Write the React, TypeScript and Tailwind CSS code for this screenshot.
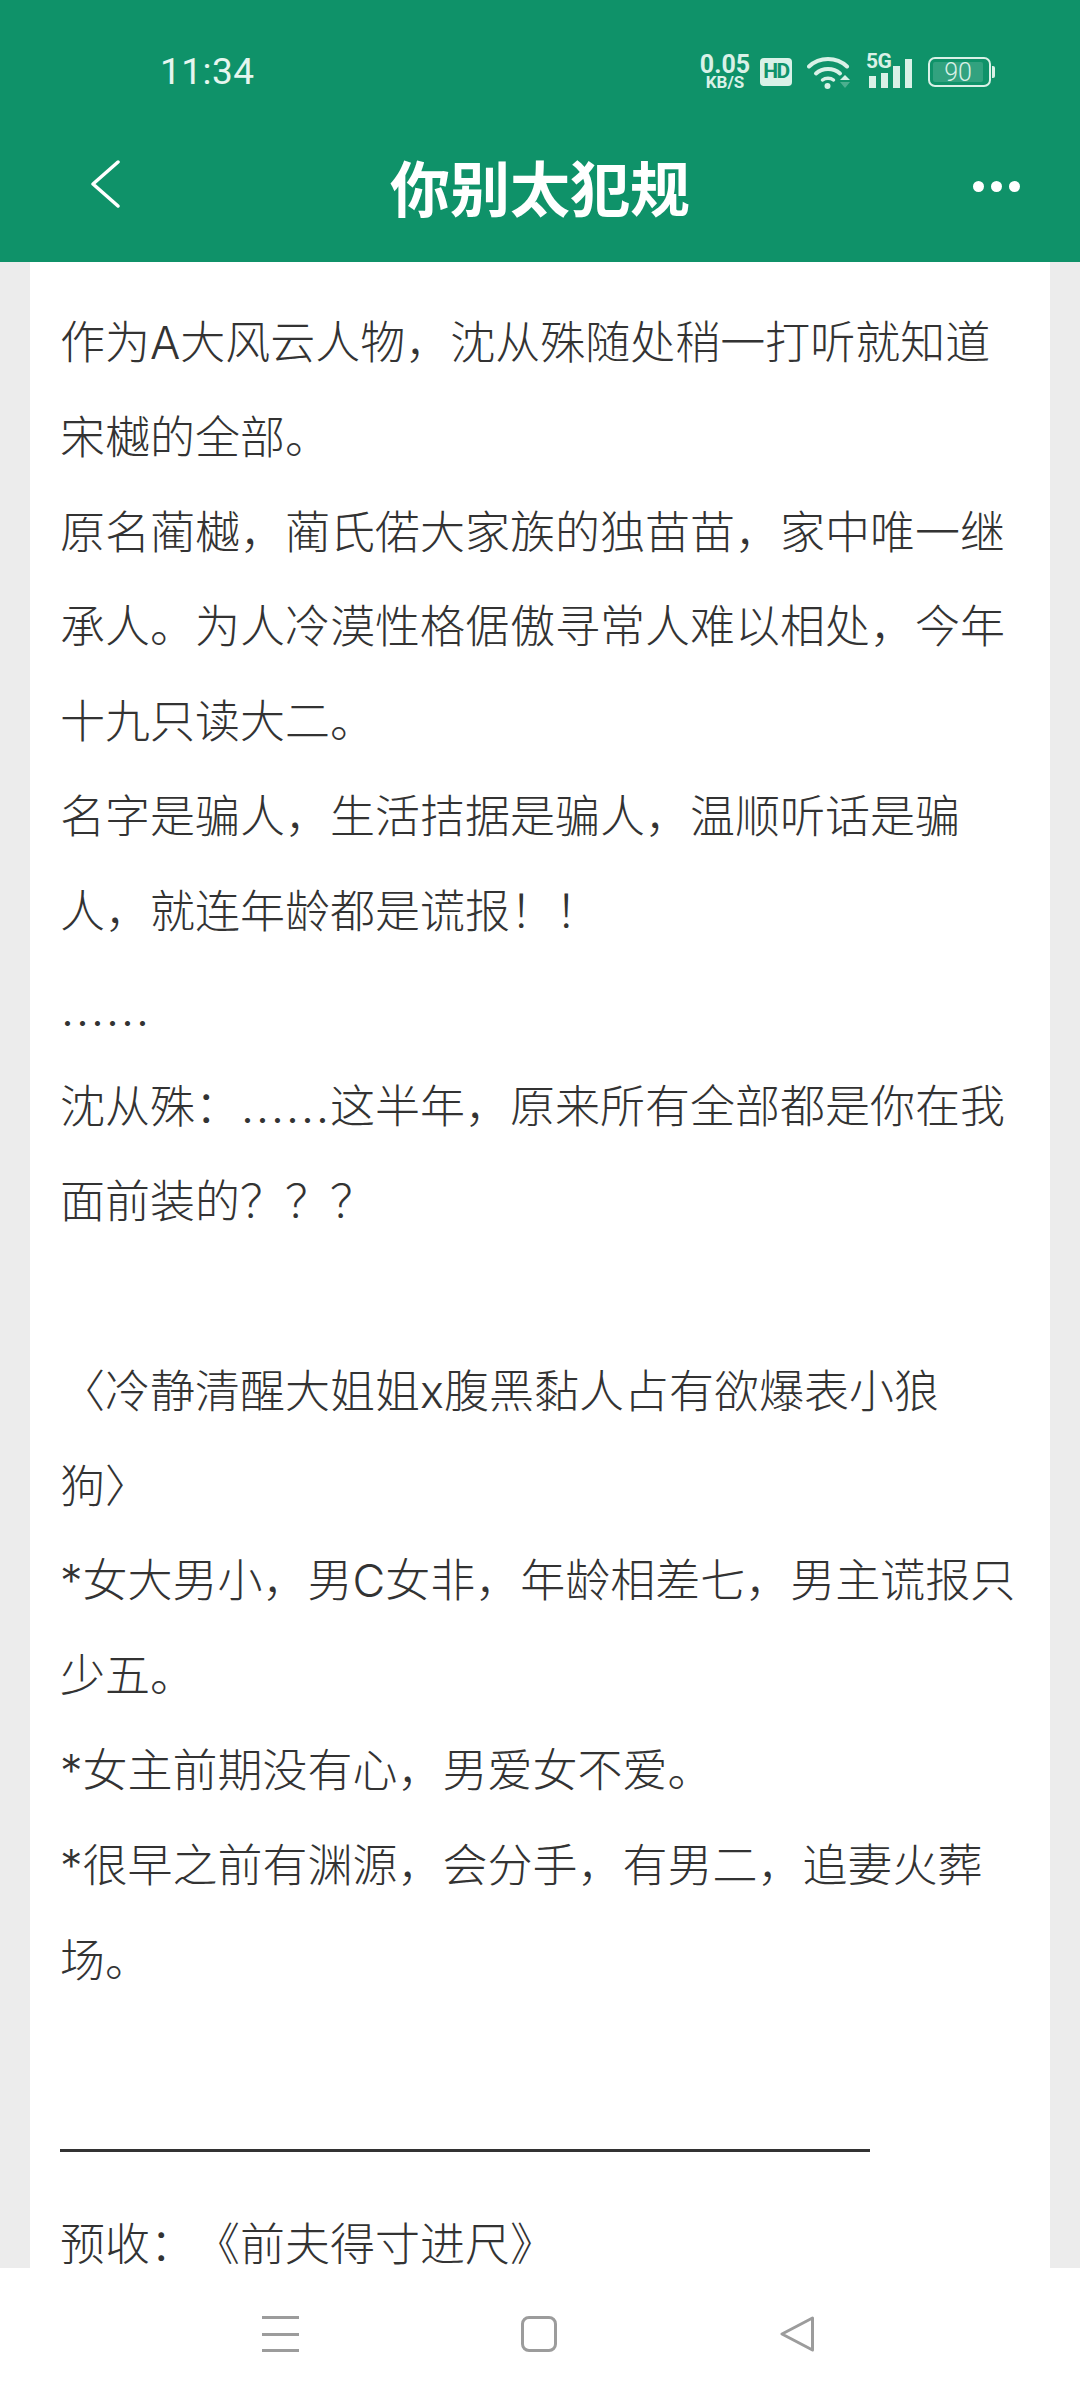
import type { ReactNode } from "react";

// the dots sit lower than the font draws them
function Dots() {
  return <span className="inline-block translate-y-[15px] font-['Noto_Sans_CJK_SC',sans-serif]">……</span>;
}

const rows: ReactNode[] = [
  "作为A大风云人物，沈从殊随处稍一打听就知道宋樾的全部。",
  "原名蔺樾，蔺氏偌大家族的独苗苗，家中唯一继承人。为人冷漠性格倨傲寻常人难以相处，今年十九只读大二。",
  "名字是骗人，生活拮据是骗人，温顺听话是骗人，就连年龄都是谎报！！",
  <Dots />,
  <>
    沈从殊：
    <Dots />
    这半年，原来所有全部都是你在我面前装的？？？
  </>,
  "",
  "〈冷静清醒大姐姐x腹黑黏人占有欲爆表小狼",
  "狗〉",
  "*女大男小，男C女非，年龄相差七，男主谎报只少五。",
  "*女主前期没有心，男爱女不爱。",
  "*很早之前有渊源，会分手，有男二，追妻火葬场。",
  "",
];

function StatusIcons() {
  return (
    <div className="flex items-center text-[#d9f1e7]">
      {/* net speed */}
      <div className="flex w-[52px] flex-col items-center font-['Roboto',sans-serif] font-bold">
        <span className="text-[25px] leading-[21px]">0.05</span>
        <span className="text-[17px] leading-[15px]">KB/S</span>
      </div>

      <div className="ml-[9px] flex h-[28px] w-[32px] items-center justify-center rounded-[4px] bg-[#d9f1e7] font-['Roboto',sans-serif] text-[21px] font-bold tracking-[-1.5px] text-[#0f9269]">
        HD
      </div>

      {/* wifi */}
      <svg className="ml-[15px]" width="44" height="34" viewBox="0 0 44 34" fill="none">
        <path d="M2 11.5C12.5 1.5 29.5 1.5 40 11.5" stroke="#d9f1e7" strokeWidth="4" strokeLinecap="round" />
        <path d="M9 18.5C15.5 12.5 26.5 12.5 33 18.5" stroke="#d9f1e7" strokeWidth="4" strokeLinecap="round" />
        <path d="M15.5 25C18.5 22.5 23.5 22.5 26.5 25" stroke="#d9f1e7" strokeWidth="3.5" strokeLinecap="round" />
        <circle cx="20.5" cy="31" r="3" fill="#d9f1e7" />
        <path d="M33 25L38 20L43 25Z" fill="#d9f1e7" />
        <path d="M33 27H43L38 33Z" fill="#d9f1e7" fillOpacity="0.3" />
      </svg>

      {/* 5G signal */}
      <div className="relative ml-[15px] flex h-[32px] w-[46px] items-end justify-end gap-[5px]">
        <span className="absolute left-0 top-[-4px] font-['Roboto',sans-serif] text-[21px] font-bold leading-[18px] tracking-[-0.5px]">
          5G
        </span>
        <span className="h-[12px] w-[7px] bg-[#d9f1e7]" />
        <span className="h-[15px] w-[7px] bg-[#d9f1e7]" />
        <span className="h-[22px] w-[7px] bg-[#d9f1e7]" />
        <span className="h-[29px] w-[7px] bg-[#d9f1e7]" />
      </div>

      {/* battery */}
      <div className="ml-[16px] flex items-center">
        <div className="flex h-[30px] w-[63px] rounded-[7px] border-2 border-[#d9f1e7] p-[3px]">
          <div className="flex w-[50px] items-center justify-center rounded-[2px] bg-white/15 font-['Roboto',sans-serif] text-[25px] font-light leading-none">
            90
          </div>
        </div>
        <span className="ml-[1px] h-[12px] w-[3px] rounded-r-[2px] bg-[#d9f1e7]" />
      </div>
    </div>
  );
}

export default function App() {
  return (
    <div
      lang="zh-CN"
      className="flex h-[2400px] w-[1080px] flex-col overflow-hidden bg-white font-['Inter','Noto_Sans_CJK_SC',sans-serif] [text-spacing-trim:space-all]"
    >
      {/* ================= HEADER ================= */}
      <header className="h-[262px] shrink-0 bg-[#0f9269] text-white">
        <div className="flex h-[116px] items-center justify-between pl-[160px] pr-[85px] pt-[28px]">
          <span className="font-['Roboto',sans-serif] text-[37px] tracking-[0.5px] text-[#e6f6ef]">11:34</span>
          <StatusIcons />
        </div>

        <div className="grid h-[140px] grid-cols-[1fr_auto_1fr] items-center">
          <svg className="-mt-[5px] ml-[90px]" width="30" height="48" viewBox="0 0 30 48" fill="none">
            <path d="M28 2L3 24L28 46" stroke="white" strokeWidth="3.5" strokeLinecap="round" strokeLinejoin="round" />
          </svg>
          <h1 className="font-['Noto_Sans_CJK_SC',sans-serif] text-[60px] font-bold leading-none">你别太犯规</h1>
          <div className="flex justify-end gap-[7px] pr-[60px]">
            <span className="h-[11px] w-[11px] rounded-full bg-white" />
            <span className="h-[11px] w-[11px] rounded-full bg-white" />
            <span className="h-[11px] w-[11px] rounded-full bg-white" />
          </div>
        </div>
      </header>

      {/* ================= CONTENT ================= */}
      <main className="min-h-0 flex-1 overflow-hidden bg-[#ececec] px-[30px]">
        <div className="bg-white pb-[40px] pl-[30px] pr-[28px] pt-[34px] text-[45px] font-light leading-[94.8px] text-[#333333]">
          {rows.map((row, i) => (
            <p key={i} className="min-h-[94.8px]">
              {row}
            </p>
          ))}
          <div className="flex h-[94.8px] items-center">
            <div className="h-[3px] w-[810px] bg-[#333333]" />
          </div>
          <p>预收：《前夫得寸进尺》</p>
        </div>
      </main>

      {/* ================= SYSTEM NAV ================= */}
      <nav className="flex h-[132px] shrink-0 items-start bg-white pl-[262px] pt-[48px]">
        <div className="flex h-[36px] w-[37px] flex-col justify-between">
          <span className="h-[3px] bg-[#9c9c9c]" />
          <span className="h-[3px] bg-[#9c9c9c]" />
          <span className="h-[3px] bg-[#9c9c9c]" />
        </div>
        <div className="ml-[222px] h-[36px] w-[36px] rounded-[8px] border-[3px] border-[#9c9c9c]" />
        <svg className="ml-[223px]" width="35" height="36" viewBox="0 0 35 36" fill="none">
          <path d="M32.5 2L2 18L32.5 34Z" stroke="#9c9c9c" strokeWidth="3" strokeLinejoin="round" />
        </svg>
      </nav>
    </div>
  );
}
